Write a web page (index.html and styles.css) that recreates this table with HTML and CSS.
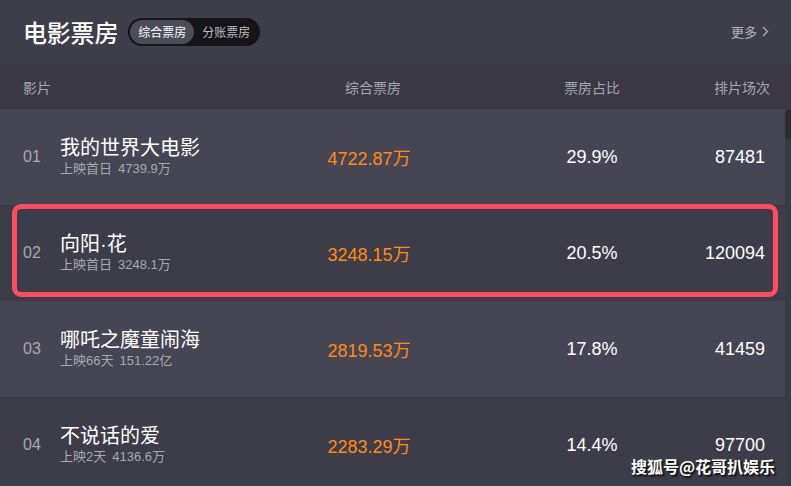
FILE: index.html
```html
<!DOCTYPE html>
<html lang="zh-CN">
<head>
<meta charset="utf-8">
<title>电影票房</title>
<link rel="stylesheet" href="styles.css">
</head>
<body>
<div class="page">
  <header class="top">
    <h1 class="title">电影票房</h1>
    <div class="toggle">
      <span class="seg active">综合票房</span>
      <span class="seg">分账票房</span>
    </div>
    <a class="more">更多<svg class="chev" width="7" height="11" viewBox="0 0 7 11"><path d="M1 1l4.5 4.5L1 10" fill="none" stroke="#b5b4bb" stroke-width="1.2"/></svg></a>
  </header>
  <div class="colhead grid">
    <span class="c-rank">影片</span>
    <span class="c-title"></span>
    <span class="c-box">综合票房</span>
    <span class="c-sp"></span>
    <span class="c-pct">票房占比</span>
    <span class="c-cnt">排片场次</span>
  </div>
  <div class="list">
    <div class="rows">
      <div class="row grid odd">
        <span class="c-rank rank">01</span>
        <div class="c-title film"><div class="name">我的世界大电影</div><div class="sub"><span>上映首日</span><span class="subv">4739.9万</span></div></div>
        <span class="c-box box">4722.87万</span>
        <span class="c-sp"></span>
        <span class="c-pct num">29.9%</span>
        <span class="c-cnt num">87481</span>
      </div>
      <div class="row grid even marked">
        <span class="c-rank rank">02</span>
        <div class="c-title film"><div class="name">向阳·花</div><div class="sub"><span>上映首日</span><span class="subv">3248.1万</span></div></div>
        <span class="c-box box">3248.15万</span>
        <span class="c-sp"></span>
        <span class="c-pct num">20.5%</span>
        <span class="c-cnt num">120094</span>
      </div>
      <div class="row grid odd">
        <span class="c-rank rank">03</span>
        <div class="c-title film"><div class="name">哪吒之魔童闹海</div><div class="sub"><span>上映66天</span><span class="subv">151.22亿</span></div></div>
        <span class="c-box box">2819.53万</span>
        <span class="c-sp"></span>
        <span class="c-pct num">17.8%</span>
        <span class="c-cnt num">41459</span>
      </div>
      <div class="row grid even">
        <span class="c-rank rank">04</span>
        <div class="c-title film"><div class="name">不说话的爱</div><div class="sub"><span>上映2天</span><span class="subv">4136.6万</span></div></div>
        <span class="c-box box">2283.29万</span>
        <span class="c-sp"></span>
        <span class="c-pct num">14.4%</span>
        <span class="c-cnt num">97700</span>
      </div>
    </div>
    <div class="scrollbar"><div class="thumb"></div></div>
  </div>
  <div class="watermark">搜狐号@花哥扒娱乐</div>
</div>
</body>
</html>
```
FILE: styles.css
```css
* { box-sizing: border-box; }
html, body {
  margin: 0;
  padding: 0;
  background: #3d3c4a;
  width: 791px;
  height: 486px;
  overflow: hidden;
  font-family: "Liberation Sans", "Noto Sans CJK SC", sans-serif;
}
.page {
  position: relative;
  width: 791px;
  height: 486px;
  overflow: hidden;
}
.top {
  height: 64px;
  display: flex;
  align-items: center;
  padding: 0 22px 0 23px;
  background: #3e3d4a;
}
.title {
  margin: 0;
  font-size: 24px;
  line-height: 28px;
  font-weight: 500;
  color: #ffffff;
  font-family: "Noto Sans CJK SC", sans-serif;
  letter-spacing: -0.2px;
}
.toggle {
  margin-left: 10px;
  display: flex;
  align-items: center;
  height: 28px;
  padding: 2px;
  border-radius: 14px;
  background: #151419;
}
.seg {
  font-size: 12px;
  line-height: 24px;
  height: 24px;
  color: #bdbcc3;
  padding: 0 8px;
  font-family: "Noto Sans CJK SC", sans-serif;
}
.seg.active {
  background: #4c4b58;
  color: #ffffff;
  border-radius: 12px;
}
.more {
  margin-left: auto;
  display: flex;
  align-items: center;
  gap: 5px;
  font-size: 13px;
  color: #b5b4bb;
  font-family: "Noto Sans CJK SC", sans-serif;
  margin-top: -1px;
}
.grid {
  display: grid;
  grid-template-columns: 37px 260px 100px 120px 104px 1fr;
  align-items: center;
  padding-left: 23px;
}
.colhead {
  height: 45px;
  background: #393844;
  font-size: 14px;
  color: #a8a7af;
  font-family: "Noto Sans CJK SC", sans-serif;
  padding-right: 21px;
}
.colhead .c-rank { white-space: nowrap; }
.colhead .c-box { text-align: center; padding-left: 6px; }
.colhead .c-pct { text-align: center; }
.colhead .c-cnt { text-align: right; }
.list {
  display: flex;
}
.rows {
  width: 785px;
}
.scrollbar {
  width: 6px;
  background: #3b3a47;
}
.thumb {
  margin-top: 1px;
  height: 29px;
  border-radius: 3px 0 0 3px;
  background: #2b2a33;
}
.row {
  height: 96px;
  padding-right: 20px;
  position: relative;
}
.odd { background: #464554; }
.even { background: #3d3c49; }
.rank {
  font-size: 16px;
  color: #a9a8b0;
}
.film {
  display: flex;
  flex-direction: column;
  margin-top: -2px;
}
.name {
  font-size: 20px;
  line-height: 26px;
  color: #ffffff;
  white-space: nowrap;
}
.sub {
  font-size: 13px;
  line-height: 16px;
  color: #a9a8b0;
  display: flex;
  gap: 6px;
  white-space: nowrap;
}
.box {
  font-size: 18px;
  color: #ff8c17;
  text-align: center;
  white-space: nowrap;
  padding-right: 2px;
}
.num {
  font-size: 18px;
  color: #ffffff;
  white-space: nowrap;
}
.c-pct.num { text-align: center; }
.c-cnt.num { text-align: right; }
.marked::after {
  content: "";
  position: absolute;
  left: 12px;
  right: 7px;
  top: -1px;
  bottom: 4px;
  border: 5px solid #ff4d5f;
  border-radius: 9px;
  pointer-events: none;
}
.watermark {
  position: absolute;
  right: 16px;
  bottom: 10px;
  font-size: 16px;
  font-weight: bold;
  color: #ffffff;
  font-family: "Noto Sans CJK SC", sans-serif;
  text-shadow: 1px 1px 1px #111, 2px 2px 2px rgba(0,0,0,0.6);
  line-height: 20px;
}
```
